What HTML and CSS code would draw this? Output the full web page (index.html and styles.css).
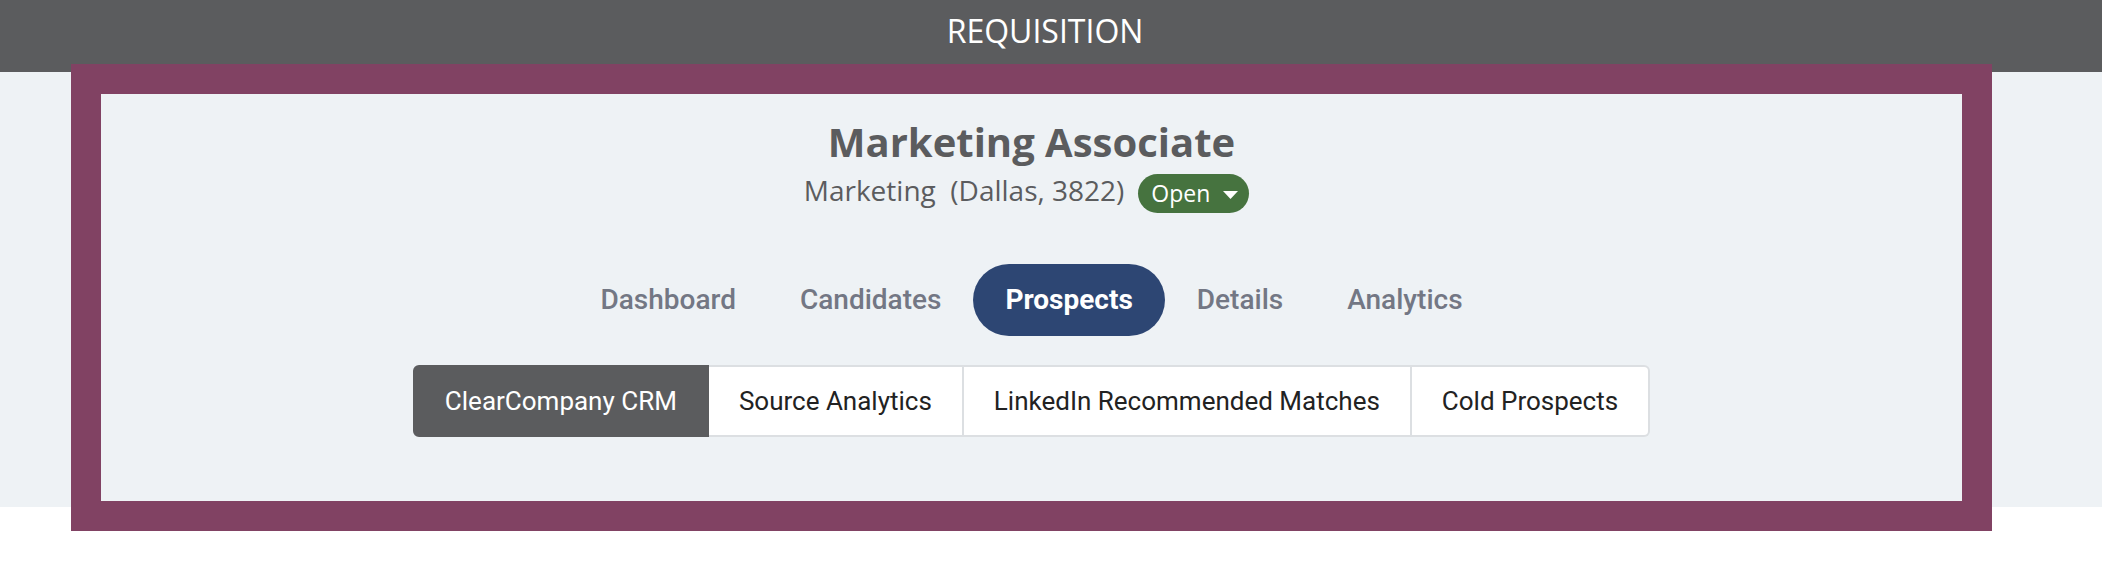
FILE: index.html
```html
<!DOCTYPE html>
<html lang="en">
<head>
<meta charset="utf-8">
<title>Requisition</title>
<link rel="stylesheet" href="styles.css">
</head>
<body>
<header class="topbar">REQUISITION</header>
<main class="page">
  <section class="req">
    <h1 class="req-title">Marketing Associate</h1>
    <div class="req-sub">
      <span class="req-meta">Marketing&nbsp; (Dallas, 3822)</span>
      <span class="status">Open
        <svg class="caret" width="15" height="8" viewBox="0 0 15 8"><path d="M0 0 H15 L7.5 8 Z" fill="#fff"/></svg>
      </span>
    </div>
    <nav class="tabs">
      <a class="tab">Dashboard</a>
      <a class="tab">Candidates</a>
      <a class="tab active">Prospects</a>
      <a class="tab">Details</a>
      <a class="tab">Analytics</a>
    </nav>
    <div class="seg">
      <button class="seg-btn active">ClearCompany CRM</button>
      <button class="seg-btn">Source Analytics</button>
      <button class="seg-btn">LinkedIn Recommended Matches</button>
      <button class="seg-btn">Cold Prospects</button>
    </div>
  </section>
</main>
<div class="highlight"></div>
</body>
</html>
```

FILE: styles.css
```css
html, body {
  margin: 0;
  padding: 0;
  background: #ffffff;
}
body {
  position: relative;
  min-height: 569px;
  font-family: "Open Sans", "Liberation Sans", sans-serif;
}
.topbar {
  box-sizing: border-box;
  height: 72px;
  padding: 9px 12px 0 0;
  background: #5b5c5e;
  color: #ffffff;
  font-family: "Open Sans", sans-serif;
  font-size: 32px;
  font-weight: 400;
  text-align: center;
  line-height: normal;
}
.page {
  background: #eef2f5;
  padding: 0 110px 0 71px;
}
.req {
  display: flex;
  flex-direction: column;
  align-items: center;
  padding: 42px 0 70px;
}
.req-title {
  margin: 0;
  font-family: "Open Sans", sans-serif;
  font-size: 40px;
  font-weight: 700;
  color: #5b5c5e;
  line-height: normal;
}
.req-sub {
  display: flex;
  align-items: flex-start;
  margin-top: 2px;
}
.req-meta {
  font-size: 28px;
  line-height: 38px;
  color: #5b5c5e;
}
.status {
  display: flex;
  align-items: center;
  box-sizing: border-box;
  height: 39px;
  margin: 3px 10px 0 14px;
  padding: 0 11px 0 13px;
  gap: 13px;
  border-radius: 20px;
  background: #46733f;
  color: #ffffff;
  font-size: 23px;
  line-height: 39px;
}
.caret {
  display: block;
  margin-top: 2px;
}
.tabs {
  display: flex;
  margin-top: 51px;
}
.tab {
  height: 72px;
  padding: 0 32px;
  border-radius: 36px;
  font-family: "Roboto", sans-serif;
  font-size: 28px;
  font-weight: 500;
  line-height: 72px;
  color: #737784;
}
.tab.active {
  background: #2d4673;
  color: #ffffff;
  font-weight: 700;
}
.seg {
  display: flex;
  margin-top: 29px;
}
.seg-btn {
  box-sizing: border-box;
  height: 72px;
  padding: 0 30px;
  margin: 0;
  border: 2px solid #dcdfe2;
  border-left-width: 0;
  background: #ffffff;
  font-family: "Roboto", sans-serif;
  font-size: 26px;
  font-weight: 400;
  color: #222222;
}
.seg-btn:first-child {
  border-left-width: 2px;
  border-radius: 6px 0 0 6px;
}
.seg-btn:last-child {
  border-radius: 0 6px 6px 0;
}
.seg-btn.active {
  background: #5b5c5e;
  border-color: #5b5c5e;
  color: #ffffff;
}
.highlight {
  position: absolute;
  top: 64px;
  left: 71px;
  width: 1921px;
  height: 467px;
  box-sizing: border-box;
  border: 30px solid #814263;
  pointer-events: none;
}
```
